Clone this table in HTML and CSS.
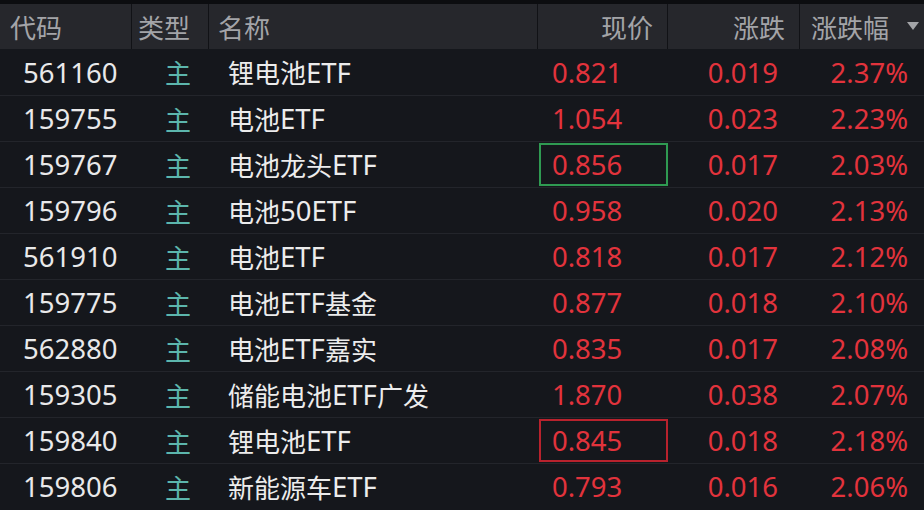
FILE: index.html
```html
<!DOCTYPE html>
<html lang="zh-CN">
<head>
<meta charset="utf-8">
<link rel="stylesheet" href="styles.css">
</head>
<body>
<div class="table">
  <div class="head">
    <div class="h c-code">代码</div>
    <div class="h c-type">类型</div>
    <div class="h c-name">名称</div>
    <div class="h c-price">现价</div>
    <div class="h c-chg">涨跌</div>
    <div class="h c-pct">涨跌幅<span class="tri"></span></div>
  </div>
  <div class="row"><div class="c-code">561160</div><div class="c-type">主</div><div class="c-name">锂电池<span class="lat">ETF</span></div><div class="c-price"><span class="pv">0.821</span></div><div class="c-chg">0.019</div><div class="c-pct">2.37%</div></div>
  <div class="row"><div class="c-code">159755</div><div class="c-type">主</div><div class="c-name">电池<span class="lat">ETF</span></div><div class="c-price"><span class="pv">1.054</span></div><div class="c-chg">0.023</div><div class="c-pct">2.23%</div></div>
  <div class="row"><div class="c-code">159767</div><div class="c-type">主</div><div class="c-name">电池龙头<span class="lat">ETF</span></div><div class="c-price"><span class="pv box-green">0.856</span></div><div class="c-chg">0.017</div><div class="c-pct">2.03%</div></div>
  <div class="row"><div class="c-code">159796</div><div class="c-type">主</div><div class="c-name">电池<span class="lat">50ETF</span></div><div class="c-price"><span class="pv">0.958</span></div><div class="c-chg">0.020</div><div class="c-pct">2.13%</div></div>
  <div class="row"><div class="c-code">561910</div><div class="c-type">主</div><div class="c-name">电池<span class="lat">ETF</span></div><div class="c-price"><span class="pv">0.818</span></div><div class="c-chg">0.017</div><div class="c-pct">2.12%</div></div>
  <div class="row"><div class="c-code">159775</div><div class="c-type">主</div><div class="c-name">电池<span class="lat">ETF</span>基金</div><div class="c-price"><span class="pv">0.877</span></div><div class="c-chg">0.018</div><div class="c-pct">2.10%</div></div>
  <div class="row"><div class="c-code">562880</div><div class="c-type">主</div><div class="c-name">电池<span class="lat">ETF</span>嘉实</div><div class="c-price"><span class="pv">0.835</span></div><div class="c-chg">0.017</div><div class="c-pct">2.08%</div></div>
  <div class="row"><div class="c-code">159305</div><div class="c-type">主</div><div class="c-name">储能电池<span class="lat">ETF</span>广发</div><div class="c-price"><span class="pv">1.870</span></div><div class="c-chg">0.038</div><div class="c-pct">2.07%</div></div>
  <div class="row"><div class="c-code">159840</div><div class="c-type">主</div><div class="c-name">锂电池<span class="lat">ETF</span></div><div class="c-price"><span class="pv box-red">0.845</span></div><div class="c-chg">0.018</div><div class="c-pct">2.18%</div></div>
  <div class="row"><div class="c-code">159806</div><div class="c-type">主</div><div class="c-name">新能源车<span class="lat">ETF</span></div><div class="c-price"><span class="pv">0.793</span></div><div class="c-chg">0.016</div><div class="c-pct">2.06%</div></div>
</div>
</body>
</html>
```

FILE: styles.css
```css
html, body {
  margin: 0;
  padding: 0;
  background: #15171c;
}
body {
  width: 924px;
  height: 510px;
  overflow: hidden;
  font-family: "Noto Sans", "Noto Sans CJK SC", sans-serif;
  font-size: 26px;
}
.table {
  border-top: 4px solid #0c0d10;
}
.head, .row {
  display: grid;
  grid-template-columns: 132px 77px 329px 130px 132px 124px;
}
.head {
  height: 45px;
  background: #26272c;
  color: #a3a4a8;
}
.h {
  display: flex;
  align-items: center;
  border-right: 1px solid #111216;
  box-sizing: border-box;
}
.h:last-child { border-right: none; }
.head .c-code { padding-left: 10px; }
.head .c-type { padding-left: 6px; }
.head .c-name { padding-left: 9px; }
.head .c-price { justify-content: flex-end; padding-right: 14px; }
.head .c-chg { justify-content: flex-end; padding-right: 14px; }
.head .c-pct { padding-left: 11px; position: relative; }
.tri {
  position: absolute;
  right: 5px;
  top: 18px;
  width: 0;
  height: 0;
  border-left: 6px solid transparent;
  border-right: 6px solid transparent;
  border-top: 8px solid #a3a4a8;
}
.row {
  height: 46px;
  box-sizing: border-box;
  border-top: 1px solid #23252b;
  align-items: center;
}
.row:nth-child(2) { border-top: none; }
.row > div {
  display: flex;
  align-items: center;
  height: 100%;
}
.row .c-code,
.row .c-price,
.row .c-chg,
.row .c-pct { font-size: 27.5px; }
.lat { font-size: 27.5px; }
.row .c-code { color: #e9e9ea; padding-left: 23px; }
.row .c-type { color: #5cb6ad; padding-left: 33px; }
.row .c-name { color: #ececec; padding-left: 19px; }
.row .c-price { color: #e2333c; padding-left: 1px; }
.row .c-chg { color: #e2333c; justify-content: flex-end; padding-right: 22px; }
.row .c-pct { color: #e2333c; justify-content: flex-end; padding-right: 16px; }
.pv {
  display: flex;
  align-items: center;
  box-sizing: border-box;
  width: 129px;
  height: 43px;
  padding-left: 13px;
}
.box-green { outline: 2px solid #2f9a52; outline-offset: -2px; }
.box-red { outline: 2px solid #b8222d; outline-offset: -2px; }
```
